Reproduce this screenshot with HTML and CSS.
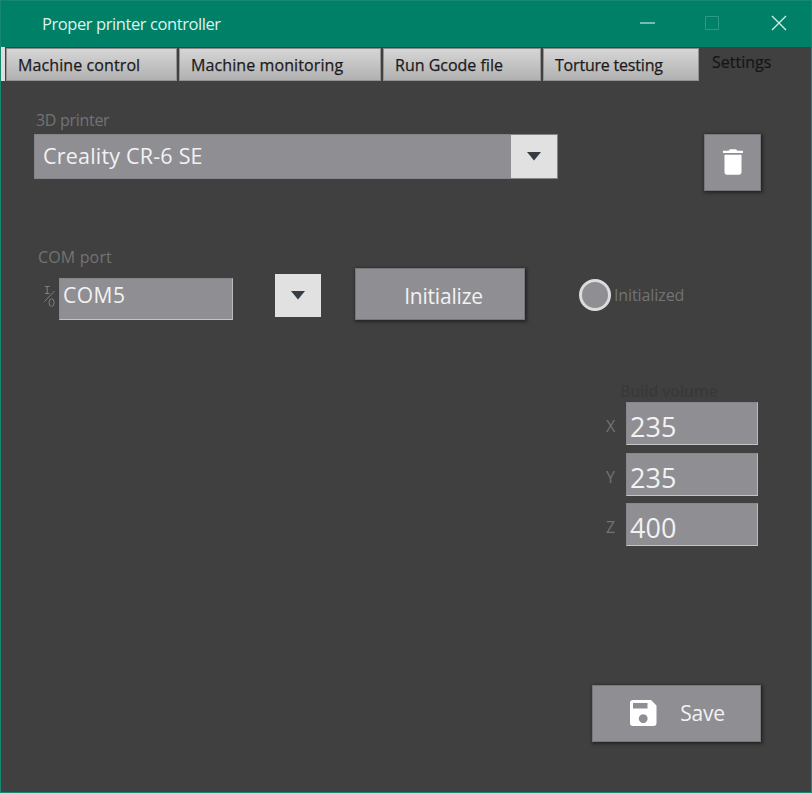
FILE: index.html
```html
<!DOCTYPE html>
<html lang="en">
<head>
<meta charset="utf-8">
<title>Proper printer controller</title>
<link rel="stylesheet" href="styles.css">
</head>
<body>
<div class="window">
  <header class="titlebar">
    <h1 class="title">Proper printer controller</h1>
    <svg class="controls" width="148" height="18" viewBox="0 0 148 18" fill="none">
      <path d="M0 9h15" stroke="#8fd0c2" stroke-width="1.6"/>
      <path d="M65.5 2.5h13v13h-13z" stroke="#2b9a84"/>
      <path d="M132 2l14 14M146 2l-14 14" stroke="#d5eee9" stroke-width="1.3"/>
    </svg>
  </header>
  <nav class="tabs">
    <span class="tab tab-control"><span>Machine control</span></span>
    <span class="tab tab-monitoring"><span>Machine monitoring</span></span>
    <span class="tab tab-gcode"><span>Run Gcode file</span></span>
    <span class="tab tab-torture"><span>Torture testing</span></span>
    <span class="tab-active">Settings</span>
  </nav>
  <main class="page">
    <section class="printer-row">
      <div>
        <div class="label label-printer">3D printer</div>
        <div class="combo">
          <span class="combo-value">Creality CR-6 SE</span>
          <span class="combo-button"><svg width="14" height="9" viewBox="0 0 14 9"><path d="M0 0h14L7 8.5z" fill="#353c44"/></svg></span>
        </div>
      </div>
      <button class="button trash" aria-label="Delete printer">
        <svg width="20" height="26" viewBox="0 0 20 26" fill="#fff"><path d="M0 1.7h5.5L7 .3h6l1.500 1.400H20V4H0zM1.500 5.700h17v17.500c0 1.600-1 2.500-2.500 2.500H4c-1.500 0-2.500-.9-2.500-2.500z"/></svg>
      </button>
    </section>
    <section class="port">
      <div class="label label-port">COM port</div>
      <div class="port-row">
        <svg class="io" width="12" height="23" viewBox="0 0 12 23" fill="none" stroke="#808082"><path d="M1 1.500h4.500M3.200 1.500v7M1 8.500h4.500M.5 16.500L10.500 6"/><ellipse cx="7.600" cy="17.600" rx="2.500" ry="3.800"/></svg>
        <div class="field field-port">COM5</div>
        <span class="drop"><svg width="14" height="9" viewBox="0 0 14 9"><path d="M0 0h14L7 8.500z" fill="#353c44"/></svg></span>
        <button class="button initialize"><span>Initialize</span></button>
        <span class="led"></span>
        <span class="label label-led">Initialized</span>
      </div>
    </section>
    <section class="volume">
      <div class="volume-title">Build volume</div>
      <div class="axis"><span class="label">X</span><div class="field">235</div></div>
      <div class="axis"><span class="label">Y</span><div class="field">235</div></div>
      <div class="axis"><span class="label">Z</span><div class="field">400</div></div>
    </section>
    <button class="button save">
      <svg width="27" height="26" viewBox="0 0 27 26" fill="#fff" fill-rule="evenodd"><path d="M3 0h18l5.500 5.500V23a3 3 0 0 1-3 3H3a3 3 0 0 1-3-3V3a3 3 0 0 1 3-3zM3 3v5.500h14.500V3zM13.200 14.200a4.400 4.400 0 1 0 .01 0z"/></svg>
      <span>Save</span>
    </button>
  </main>
</div>
</body>
</html>
```
FILE: styles.css
```css
* { box-sizing: border-box; }
body { margin: 0; font-family: "Open Sans", "Noto Sans", sans-serif; }
.window {
  width: 812px; height: 793px; overflow: hidden;
  background: #404040; border: 1px solid #168872;
  display: flex; flex-direction: column;
}
.titlebar {
  height: 46px; flex: none; background: #008066;
  display: flex; align-items: center; justify-content: space-between;
  padding: 0 23px 0 41px;
}
.title { margin: 0; font-size: 16.5px; font-weight: 400; line-height: 24px; color: #dff2ee; letter-spacing: -0.42px; white-space: nowrap; }
.controls { display: block; margin-top: -2px; }
.tabs { display: flex; gap: 2px; height: 34px; flex: none; border-left: 4px solid #dedede; padding: 1px 0 0 1px; }
.tab {
  height: 33px; padding-left: 11px; border: 1px solid #929292; border-top-color: #8a8a8a;
  background: linear-gradient(#d6d6d6, #b1b1b1);
  font-size: 16px; line-height: 32px; color: #1d1a1c; letter-spacing: 0.1px; white-space: nowrap;
  -webkit-text-stroke: 0.25px #1d1a1c;
}
.tab-control { width: 171px; }
.tab-monitoring { width: 202px; }
.tab-gcode { width: 158px; letter-spacing: 0; }
.tab-torture { width: 156px; letter-spacing: -0.2px; }
.tab-active { margin-left: 11px; font-size: 16px; line-height: 28px; color: #151515; letter-spacing: 0; -webkit-text-stroke: 0.2px #151515; }
.page { flex: 1; display: flex; flex-direction: column; padding: 28px 50px 0 33px; }
.label { font-size: 16px; line-height: 22px; color: #737373; letter-spacing: -0.3px; white-space: nowrap; }
.printer-row { display: flex; justify-content: space-between; height: 137px; }
.label-printer { padding-left: 2px; margin-bottom: 3px; }
.combo { width: 524px; height: 45px; display: flex; background: #8f8e93; border: 1px solid #848388; }
.combo-value { flex: 1; padding-left: 8px; font-size: 21.5px; line-height: 41px; color: #f2f2f2; letter-spacing: 0.2px; }
.combo-button, .drop { display: flex; align-items: center; justify-content: center; background: #e1e1e1; }
.combo-button { width: 46px; }
.button {
  display: flex; align-items: center; justify-content: center; padding: 0;
  background: #8f8e93; border: 1px solid #77767b; border-radius: 0; box-shadow: 1px 1px 3px 1px #252525;
  font: 21px "Open Sans", "Noto Sans", sans-serif; color: #f2f2f2; letter-spacing: -0.2px;
}
.trash { width: 57px; height: 57px; margin-top: 25px; padding-bottom: 1px; }
.label-port { padding-left: 4px; letter-spacing: 0.15px; }
.port-row { display: flex; align-items: flex-start; height: 54px; }
.io { margin: 17px 3px 0 10px; }
.field {
  background: #8f8e93; border: 1px solid #88878c; border-right: 1px solid #bababd; border-bottom: 1px solid #c4c4c6;
  color: #f2f2f2; white-space: nowrap;
}
.field-port { width: 174px; height: 42px; margin-top: 10px; padding-left: 3px; font-size: 21px; line-height: 33px; letter-spacing: 0.5px; }
.drop { width: 46px; height: 43px; margin: 6px 0 0 42px; }
.initialize { width: 170px; height: 52px; margin-left: 34px; padding: 3px 0 0 7px; }
.led { width: 32px; height: 32px; margin: 11px 0 0 54px; border: 3px solid #dcdcdc; border-radius: 50%; background: #8f8e93; }
.label-led { margin: 16px 0 0 3px; letter-spacing: -0.1px; }
.volume { align-self: flex-end; width: 153px; margin: 56px 3px 0 0; }
.volume-title { height: 24px; padding: 2px 0 0 15px; font-size: 16px; line-height: 22px; color: #393939; font-weight: 600; letter-spacing: -0.3px; white-space: nowrap; }
.axis { display: flex; align-items: center; justify-content: space-between; margin-bottom: 7.5px; }
.axis .field { width: 132px; height: 43px; padding-left: 3px; font-size: 27px; line-height: 47px; }
.axis .label { padding: 5px 0 0 1px; }
.save { align-self: flex-end; width: 169px; height: 57px; margin-top: 131.5px; padding: 0 0 2px 2px; gap: 23px; }
```
